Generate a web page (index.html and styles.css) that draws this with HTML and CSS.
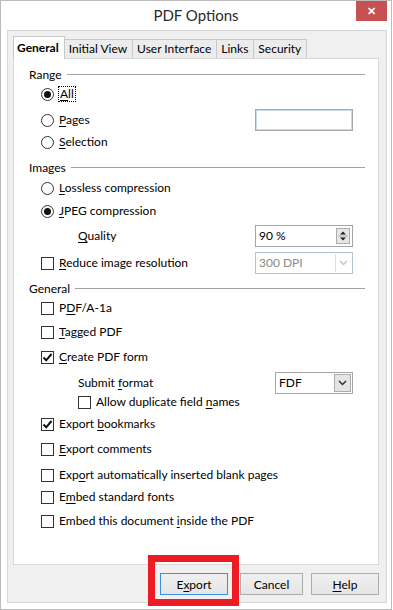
FILE: index.html
```html
<!DOCTYPE html>
<html>
<head>
  <meta name="viewport" content="width=device-width, initial-scale=1.0">
  <title>PDF Options</title>
  <link rel="stylesheet" href="styles.css">
</head>
<body>
  <div class="window">
    <div class="titlebar">
      <span></span>
      <span class="title">PDF Options</span>
      <span class="close">&#10005;</span>
    </div>

    <div class="client">
      <div class="tabs">
        <div class="tab active">General</div>
        <div class="tab">Initial View</div>
        <div class="tab">User Interface</div>
        <div class="tab">Links</div>
        <div class="tab">Security</div>
      </div>

      <div class="panel">
        <div class="section">
          <div class="legend"><span>Range</span></div>
          <div class="options">
            <div class="opt mt1"><span class="radio checked"></span><span class="focus"><u>A</u>ll</span></div>
            <div class="opt field-row mt5">
              <span class="radio"></span><span><u>P</u>ages</span>
              <span class="textbox"></span>
            </div>
            <div class="opt mt1"><span class="radio"></span><span><u>S</u>election</span></div>
          </div>
        </div>

        <div class="section mt7">
          <div class="legend"><span>Images</span></div>
          <div class="options">
            <div class="opt mt2"><span class="radio"></span><span><u>L</u>ossless compression</span></div>
            <div class="opt mt3"><span class="radio checked"></span><span><u>J</u>PEG compression</span></div>
            <div class="opt field-row sub mt4">
              <span><u>Q</u>uality</span>
              <span class="spinbox">
                <span class="value">90 %</span>
                <span class="spin">
                  <svg width="12" height="14" viewBox="0 0 12 14">
                    <path d="M3 5.5 L6 2.5 L9 5.5 Z" fill="#222"/>
                    <path d="M1 7 H11" stroke="#b0b0b0" stroke-width="1"/>
                    <path d="M3 8.5 L6 11.5 L9 8.5 Z" fill="#222"/>
                  </svg>
                </span>
              </span>
            </div>
            <div class="opt field-row mt5">
              <span class="checkbox"></span><span><u>R</u>educe image resolution</span>
              <span class="combo disabled">
                <span class="value">300 DPI</span>
                <span class="drop">
                  <svg width="9" height="6" viewBox="0 0 9 6"><path d="M1 1 L4.5 4.5 L8 1" fill="none" stroke="#c4c4c4" stroke-width="1.4"/></svg>
                </span>
              </span>
            </div>
          </div>
        </div>

        <div class="section mt6">
          <div class="legend"><span>General</span></div>
          <div class="options">
            <div class="opt mt1"><span class="checkbox"></span><span>P<u>D</u>F/A-1a</span></div>
            <div class="opt mt4"><span class="checkbox"></span><span><u>T</u>agged PDF</span></div>
            <div class="opt mt5">
              <span class="checkbox checked">
                <svg width="11" height="11" viewBox="0 0 11 11"><path d="M1.5 5.5 L4.2 8.3 L9.5 2" fill="none" stroke="#111" stroke-width="2"/></svg>
              </span>
              <span><u>C</u>reate PDF form</span>
            </div>
            <div class="opt field-row sub mt5">
              <span>Submit <u>f</u>ormat</span>
              <span class="combo short">
                <span class="value">FDF</span>
                <span class="drop enabled">
                  <svg width="9" height="6" viewBox="0 0 9 6"><path d="M1 1 L4.5 4.5 L8 1" fill="none" stroke="#333" stroke-width="1.5"/></svg>
                </span>
              </span>
            </div>
            <div class="opt sub slim"><span class="checkbox"></span><span>Allow duplicate field <u>n</u>ames</span></div>
            <div class="opt mt4">
              <span class="checkbox checked">
                <svg width="11" height="11" viewBox="0 0 11 11"><path d="M1.5 5.5 L4.2 8.3 L9.5 2" fill="none" stroke="#111" stroke-width="2"/></svg>
              </span>
              <span>Export <u>b</u>ookmarks</span>
            </div>
            <div class="opt mt5"><span class="checkbox"></span><span><u>E</u>xport comments</span></div>
            <div class="opt mt6"><span class="checkbox"></span><span>Exp<u>o</u>rt automatically inserted blank pages</span></div>
            <div class="opt mt2"><span class="checkbox"></span><span>E<u>m</u>bed standard fonts</span></div>
            <div class="opt mt4"><span class="checkbox"></span><span>Embed this document <u>i</u>nside the PDF</span></div>
          </div>
        </div>
      </div>

      <div class="buttons">
        <button class="btn default">E<u>x</u>port</button>
        <button class="btn cancel">Cancel</button>
        <button class="btn help"><u>H</u>elp</button>
      </div>
    </div>

    <div class="highlight"></div>
  </div>
</body>
</html>
```

FILE: styles.css
```css
* {
  box-sizing: border-box;
}

body {
  margin: 0;
  background-color: #ffffff;
  font-family: Lato, "Noto Sans", sans-serif;
  font-size: 12px;
  color: #000;
}

u {
  text-decoration-thickness: 1px;
  text-underline-offset: 2px;
}

.window {
  position: relative;
  width: 392px;
  height: 610px;
  border: 1px solid #bcbcbc;
  background-color: #ffffff;
}

.titlebar {
  display: grid;
  grid-template-columns: 1fr auto 1fr;
  align-items: start;
  height: 29px;
}

.title {
  padding-top: 5px;
  font-size: 15px;
  color: #2b2b2b;
}

.close {
  justify-self: end;
  width: 31px;
  height: 20px;
  margin-right: 4px;
  background-color: #c75050;
  color: #fff;
  font-size: 11px;
  font-weight: bold;
  text-align: center;
  line-height: 20px;
}

.client {
  margin: 0 4px 0 6px;
  height: 573px;
  border: 1px solid #d6d6d6;
  background-color: #f0f0f0;
  padding: 5px 7px 0 5px;
}

/* tab strip */
.tabs {
  display: flex;
  align-items: flex-end;
  height: 22px;
}

.tab {
  height: 19px;
  padding: 0 5px 0 4px;
  border: 1px solid #c9c9c9;
  border-bottom: none;
  border-left: none;
  background-color: #ececec;
  line-height: 17px;
}

.tab.active {
  position: relative;
  z-index: 1;
  height: 23px;
  margin-bottom: -1px;
  padding: 0 5px 0 3px;
  border-left: 1px solid #c9c9c9;
  background-color: #fff;
  font-weight: bold;
  line-height: 21px;
}

.panel {
  height: 507px;
  border: 1px solid #d9d9d9;
  background-color: #fff;
  padding: 7px 13px 0 15px;
}

/* group boxes */
.legend {
  display: flex;
  align-items: center;
  height: 17px;
}

.legend::after {
  content: "";
  flex: 1;
  height: 1px;
  margin-left: 5px;
  background-color: #a0a0a0;
}

.options {
  padding: 0 12px;
}

.opt {
  display: flex;
  align-items: center;
  gap: 5px;
  height: 20px;
  line-height: 16px;
}

.opt.field-row {
  height: 22px;
}

.opt.sub {
  padding-left: 37px;
}

.opt.slim {
  height: 16px;
}

.mt1 { margin-top: 1px; }
.mt2 { margin-top: 2px; }
.mt3 { margin-top: 3px; }
.mt4 { margin-top: 4px; }
.mt5 { margin-top: 5px; }
.mt6 { margin-top: 6px; }
.mt7 { margin-top: 7px; }

.radio,
.checkbox {
  flex: none;
  display: flex;
  align-items: center;
  justify-content: center;
  width: 13px;
  height: 13px;
  border: 1px solid #333;
  background-color: #fff;
}

.radio {
  border-radius: 50%;
}

.radio.checked::after {
  content: "";
  width: 7px;
  height: 7px;
  border-radius: 50%;
  background-color: #111;
}

.focus {
  padding: 0 1px;
  outline: 1px dotted #000;
  line-height: 14px;
}

/* fields on the right */
.textbox,
.spinbox,
.combo {
  display: flex;
  align-items: center;
  margin-left: auto;
  width: 98px;
  height: 22px;
  background-color: #fff;
}

.textbox {
  border: 1px solid #a8a8a8;
  box-shadow: inset 0 0 0 1px #c9daee;
}

.spinbox {
  border: 1px solid #a5a5a5;
  padding: 0 2px 0 3px;
}

.value {
  flex: 1;
}

.spin {
  display: flex;
  align-items: center;
  justify-content: center;
  width: 14px;
  height: 16px;
  border: 1px solid #acacac;
  background-color: #e6e6e6;
}

.combo {
  border: 1px solid #a5a5a5;
  padding: 0 1px 0 3px;
}

.combo.disabled {
  border-color: #b5c2d4;
  color: #8a8a8a;
}

.combo.short {
  width: 78px;
}

.drop {
  display: flex;
  align-items: center;
  justify-content: center;
  width: 16px;
  height: 18px;
  border-left: 1px solid #dedede;
}

.drop.enabled {
  width: 17px;
  border: 1px solid #acacac;
  background-color: #e5e5e5;
}

/* dialog buttons */
.buttons {
  display: flex;
  justify-content: flex-end;
  margin-top: 8px;
}

.btn {
  height: 22px;
  border: 1px solid #acacac;
  background: linear-gradient(#f0f0f0, #e5e5e5);
  font-family: inherit;
  font-size: 12px;
  color: #000;
  padding: 0;
}

.btn.default {
  width: 68px;
  border-color: #3c8fe0;
}

.btn.cancel {
  width: 63px;
  margin-left: 12px;
}

.btn.help {
  width: 68px;
  margin-left: 8px;
}

/* red annotation drawn over the screenshot */
.highlight {
  position: absolute;
  left: 147px;
  top: 554px;
  width: 91px;
  height: 51px;
  border: 7px solid #ed1c24;
}
```
